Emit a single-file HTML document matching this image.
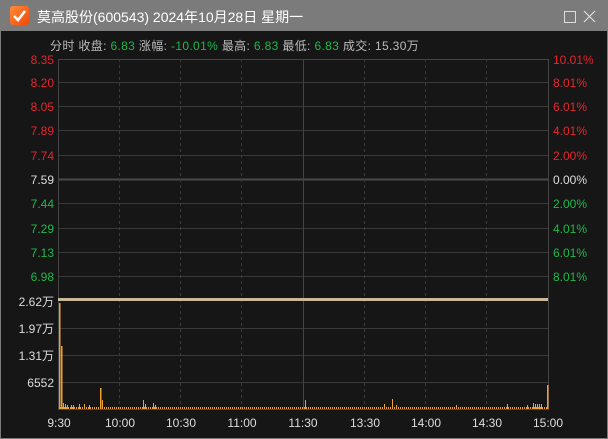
<!DOCTYPE html><html><head><meta charset="utf-8"><style>
body{margin:0;width:608px;height:439px;overflow:hidden;background:#161616;font-family:"Liberation Sans","Noto Sans CJK SC",sans-serif}
.win{position:absolute;left:0;top:0;width:606px;height:437px;border:1px solid #7a7a7a;background:#161616}
.tb{position:absolute;left:0;top:0;width:606px;height:30px;background:#7b7b7b;color:#fff;font-size:14px}
</style></head><body><div class="win">
<div class="tb">
<div style="position:absolute;left:9px;top:5px;width:19px;height:19px;border-radius:3px;background:linear-gradient(135deg,#ff8a3a,#f04a08)"></div>
<svg style="position:absolute;left:9px;top:5px" width="19" height="19"><path d="M4 10 L8 14 L15 5" stroke="#fff" stroke-width="2.6" fill="none"/></svg>
<div style="position:absolute;left:36px;top:6px">莫高股份(600543) 2024年10月28日 星期一</div>
<div style="position:absolute;left:563px;top:10px;width:10px;height:10px;border:1px solid #ddd"></div>
<svg style="position:absolute;left:582px;top:9px" width="13" height="13"><path d="M1 1L12 12M12 1L1 12" stroke="#ddd" stroke-width="1.2"/></svg>
</div>
<div style="position:absolute;left:49px;top:36px;font-size:12px;letter-spacing:0.35px;color:#bbb;white-space:pre">分时 收盘: <span style="color:#1eb84a">6.83</span> 涨幅: <span style="color:#1eb84a">-10.01%</span> 最高: <span style="color:#1eb84a">6.83</span> 最低: <span style="color:#1eb84a">6.83</span> 成交: 15.30万</div>
</div>
<svg style="position:absolute;left:0;top:0" width="608" height="439" font-family="Liberation Sans,Noto Sans CJK SC,sans-serif" font-size="12">
<defs><pattern id="p" width="2" height="2" patternUnits="userSpaceOnUse"><rect width="1" height="2" fill="#f0a030"/></pattern></defs>
<g stroke="#3a3a3a" stroke-width="1">
<path d="M58 82.5H548M58 106.5H548M58 130.5H548M58 155.5H548M58 203.5H548M58 228.5H548M58 252.5H548M58 276.5H548M58 328.5H548M58 355.5H548M58 382.5H548"/>
<path d="M58 59.5H548" stroke="#444"/>
<path d="M58 179.5H548" stroke="#4a4a4a" stroke-width="2"/>
<path d="M58.5 59V410M548.5 59V410M303.5 59V410" stroke="#444"/>
<path d="M119.5 59V410M180.5 59V410M241.5 59V410M364.5 59V410M425.5 59V410M486.5 59V410" stroke-dasharray="3 3"/>
<path d="M58 409.5H548" stroke="#444"/>
</g>
<rect x="58" y="298" width="490" height="3" fill="#cbb99c"/>
<rect x="60" y="407" width="487" height="2" fill="url(#p)"/>
<g fill="#f0a030">
<rect x="59" y="303" width="1.5" height="106"/><rect x="61" y="346" width="1.5" height="63"/>
<rect x="63" y="403" width="1" height="6"/><rect x="65" y="404" width="1" height="5"/><rect x="67" y="405" width="1" height="4"/><rect x="71" y="405" width="1" height="4"/><rect x="73" y="405" width="1" height="4"/>
<rect x="79" y="404" width="1" height="5"/><rect x="84" y="404" width="1" height="5"/><rect x="89" y="405" width="1" height="4"/>
<rect x="100" y="388" width="1.5" height="21"/><rect x="102" y="400" width="1" height="9"/>
<rect x="143" y="400" width="1" height="9"/><rect x="145" y="404" width="1" height="5"/><rect x="153" y="403" width="1" height="6"/><rect x="155" y="405" width="1" height="4"/>
<rect x="305" y="400" width="1" height="9"/><rect x="384" y="404" width="1" height="5"/><rect x="392" y="399" width="1" height="10"/><rect x="396" y="405" width="1" height="4"/>
<rect x="456" y="405" width="1" height="4"/><rect x="507" y="404" width="1" height="5"/><rect x="527" y="405" width="1" height="4"/>
<rect x="533" y="403" width="1" height="6"/><rect x="535" y="404" width="1" height="5"/><rect x="537" y="404" width="1" height="5"/><rect x="539" y="404" width="1" height="5"/><rect x="541" y="404" width="1" height="5"/><rect x="547" y="385" width="1.5" height="24"/>
</g>
<g text-anchor="end">
<g fill="#e8242c"><text x="54" y="64">8.35</text><text x="54" y="87">8.20</text><text x="54" y="111">8.05</text><text x="54" y="135">7.89</text><text x="54" y="160">7.74</text></g>
<text x="54" y="184" fill="#ddd">7.59</text>
<g fill="#1eb84a"><text x="54" y="208">7.44</text><text x="54" y="233">7.29</text><text x="54" y="257">7.13</text><text x="54" y="281">6.98</text></g>
<g fill="#ddd"><text x="54" y="306">2.62万</text><text x="54" y="333">1.97万</text><text x="54" y="360">1.31万</text><text x="54" y="387">6552</text></g>
</g>
<g fill="#e8242c"><text x="553" y="64">10.01%</text><text x="553" y="87">8.01%</text><text x="553" y="111">6.01%</text><text x="553" y="135">4.01%</text><text x="553" y="160">2.00%</text></g>
<text x="553" y="184" fill="#ddd">0.00%</text>
<g fill="#1eb84a"><text x="553" y="208">2.00%</text><text x="553" y="233">4.01%</text><text x="553" y="257">6.01%</text><text x="553" y="281">8.01%</text></g>
<g fill="#ddd" text-anchor="middle"><text x="59" y="427">9:30</text><text x="120" y="427">10:00</text><text x="181" y="427">10:30</text><text x="242" y="427">11:00</text><text x="303" y="427">11:30</text><text x="365" y="427">13:30</text><text x="426" y="427">14:00</text><text x="487" y="427">14:30</text><text x="548" y="427">15:00</text></g>
</svg>
</body></html>
